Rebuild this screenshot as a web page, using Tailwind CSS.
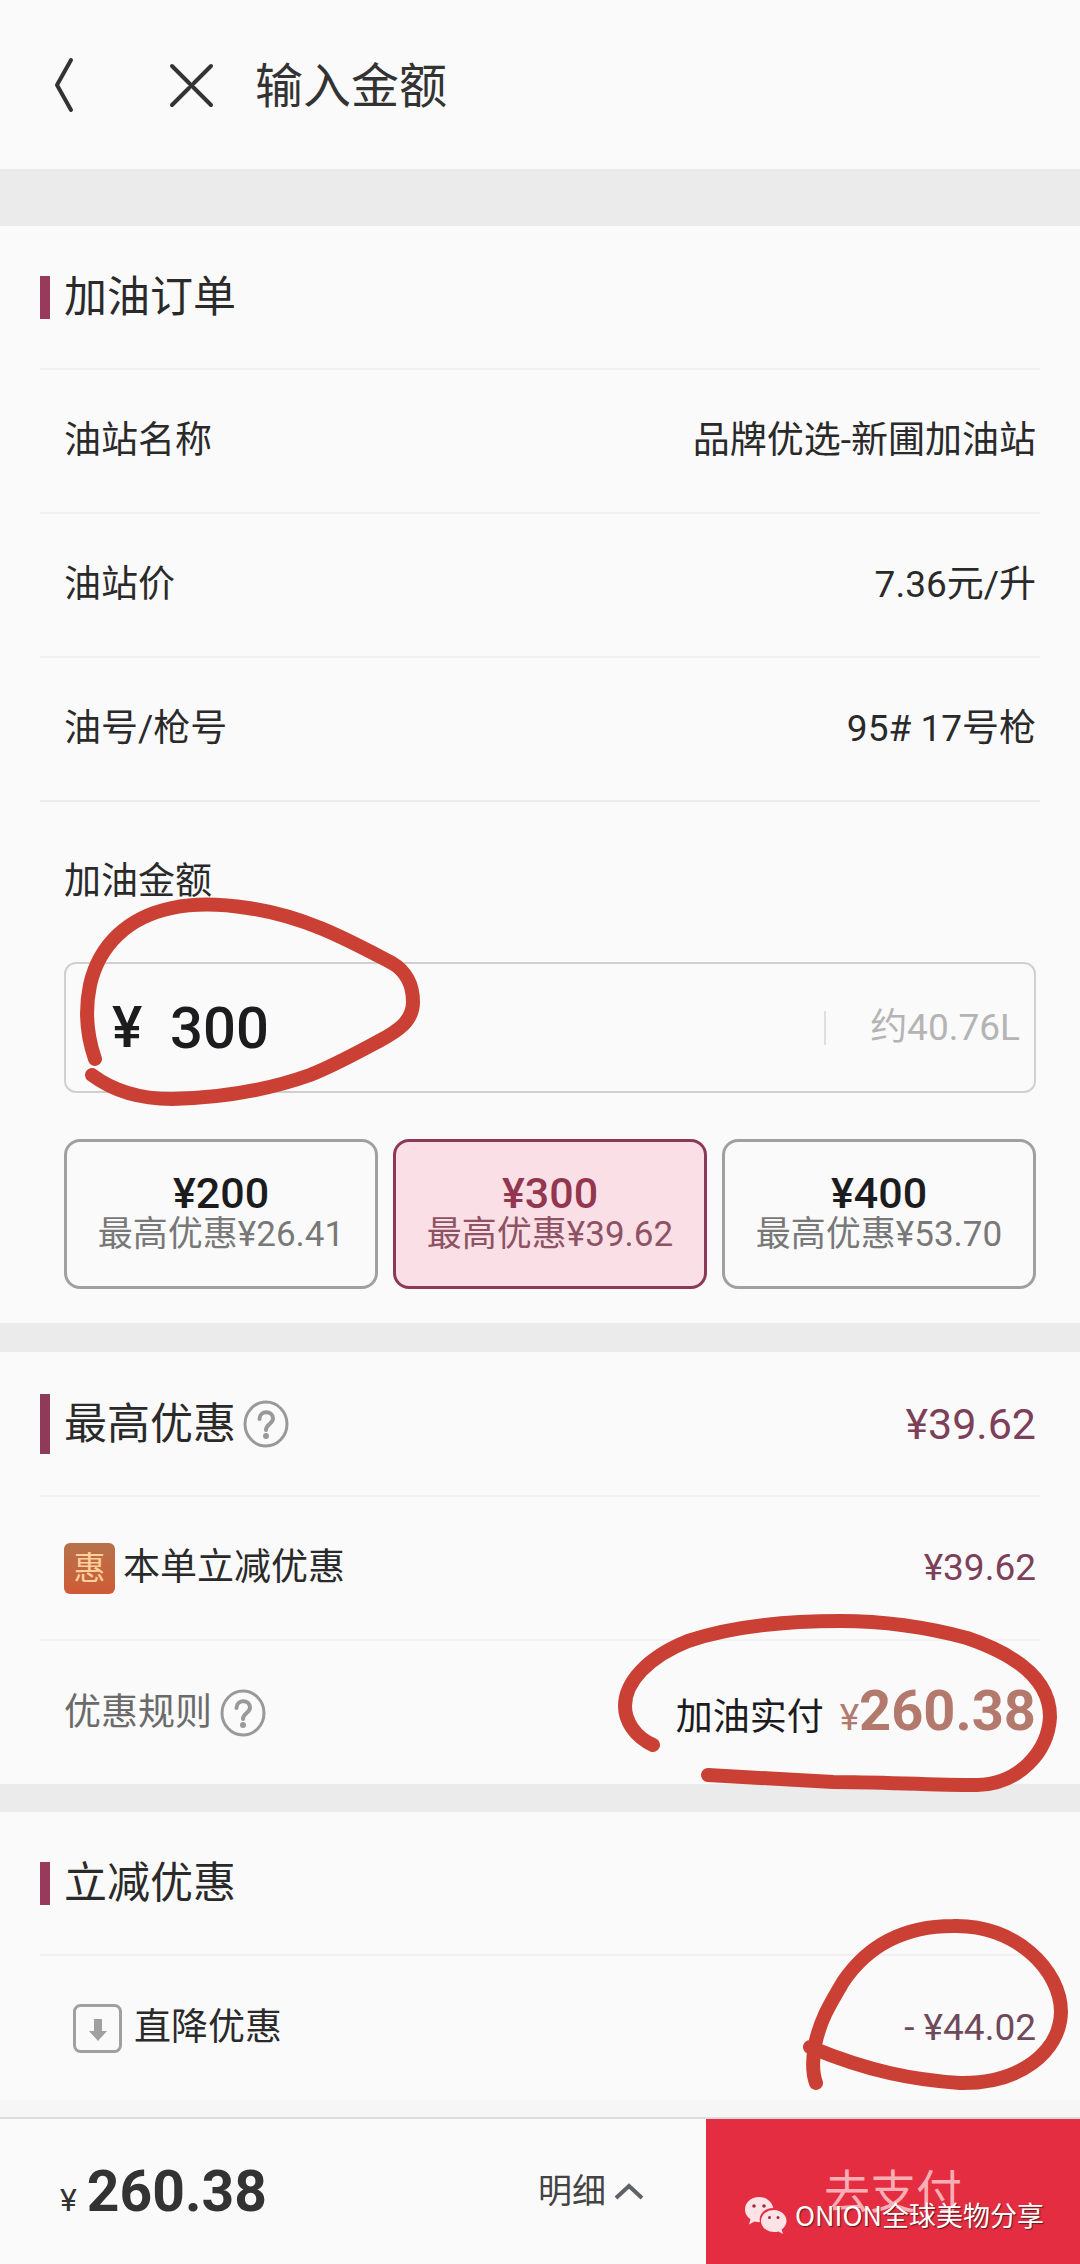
<!DOCTYPE html>
<html lang="zh-CN">
<head>
<meta charset="utf-8">
<meta name="viewport" content="width=device-width, initial-scale=1">
<title>输入金额</title>
<script src="https://cdn.jsdelivr.net/npm/@tailwindcss/browser@4"></script>
</head>
<body class="flex min-h-screen flex-col bg-[#fafafa] font-['Roboto','Noto_Sans_CJK_SC',sans-serif] text-[37px] leading-[48px] text-[#2a2a2a]">

<header class="flex h-[169px] items-center pl-[50px]">
  <button type="button" aria-label="返回" class="flex w-[118px] shrink-0">
    <svg class="h-[60px] w-[28px]" viewBox="0 0 28 60" fill="none" stroke="#333" stroke-width="4" stroke-linecap="round" stroke-linejoin="round"><path d="M21 5 7 30 21 55"/></svg>
  </button>
  <button type="button" aria-label="关闭" class="flex w-[87px] shrink-0">
    <svg class="h-[48px] w-[48px]" viewBox="0 0 48 48" fill="none" stroke="#333" stroke-width="4" stroke-linecap="round"><path d="M4 5 43 44M43 5 26 22M21 27 4 44"/></svg>
  </button>
  <h1 class="pt-1 text-[48px] leading-[60px] text-[#333]">输入金额</h1>
</header>

<main class="flex-1">
  <section class="relative border-t-[57px] border-[#ebebeb]">
    <div class="mx-10">
      <div class="flex h-[144px] items-center gap-[14px] border-b-2 border-[#f1f1f1]">
        <span class="h-[43px] w-[10px] bg-[#973a5b]"></span>
        <h2 class="text-[43px]">加油订单</h2>
      </div>
      <dl>
        <div class="flex h-[144px] items-center justify-between border-b-2 border-[#f1f1f1] pr-1 pl-6"><dt>油站名称</dt><dd>品牌优选-新圃加油站</dd></div>
        <div class="flex h-[144px] items-center justify-between border-b-2 border-[#f1f1f1] pr-1 pl-6"><dt>油站价</dt><dd>7.36元/升</dd></div>
        <div class="flex h-[144px] items-center justify-between border-b-2 border-[#ededed] pr-1 pl-6"><dt>油号/枪号</dt><dd>95# 17号枪</dd></div>
      </dl>
    </div>
    <div class="pt-14 pr-11 pb-[34px] pl-16">
      <label for="amount" class="block">加油金额</label>
      <div class="mt-14 flex h-[131px] items-center rounded-xl border-2 border-[#d0d0d0] pr-[14px] pl-[46px] font-medium text-[#1c1c1e]">
        <span class="w-[58px] shrink-0 text-[57px] leading-[68px]">¥</span>
        <input id="amount" type="text" inputmode="decimal" value="300" class="h-[68px] min-w-0 flex-1 bg-transparent text-[58px] leading-[68px] outline-none">
        <span class="h-[34px] w-[2px] bg-[#dedede]"></span>
        <span class="ml-[44px] font-normal text-[#b4b4b4]">约40.76L</span>
      </div>
      <div class="mt-[46px] grid grid-cols-3 gap-[15px]">
        <button type="button" aria-pressed="false" class="flex h-[150px] flex-col items-center justify-center rounded-2xl border-3 border-[#a0a0a0]">
          <span class="text-[43px] leading-[42px] font-medium text-[#1c1c1e]">¥200</span>
          <span class="text-[35px] leading-[42px] text-[#787878]">最高优惠¥26.41</span>
        </button>
        <button type="button" aria-pressed="true" class="flex h-[150px] flex-col items-center justify-center rounded-2xl border-3 border-[#8c3857] bg-[#fadfe6]">
          <span class="text-[43px] leading-[42px] font-medium text-[#93364f]">¥300</span>
          <span class="text-[35px] leading-[42px] text-[#8f5263]">最高优惠¥39.62</span>
        </button>
        <button type="button" aria-pressed="false" class="flex h-[150px] flex-col items-center justify-center rounded-2xl border-3 border-[#a0a0a0]">
          <span class="text-[43px] leading-[42px] font-medium text-[#1c1c1e]">¥400</span>
          <span class="text-[35px] leading-[42px] text-[#787878]">最高优惠¥53.70</span>
        </button>
      </div>
    </div>
    <!-- hand-drawn ring round the amount -->
    <svg class="pointer-events-none absolute top-[670px] left-[80px] z-10 h-[212px] w-[345px]" viewBox="80 896 345 212" fill="none" stroke="#cb4034" stroke-width="14" stroke-linecap="round" stroke-linejoin="round" aria-hidden="true"><path d="M95 1059C85 1030 86 1004 90 985C99 945 128 917 172 908C195 903 222 904 248 908C305 916 350 941 392 963C406 971 413 985 413 1002C413 1021 398 1031 379 1041C355 1054 333 1066 310 1075C265 1091 222 1098 172 1099C138 1099 112 1090 92 1075"/></svg>
  </section>

  <section class="relative border-t-[29px] border-[#ebebeb]">
    <div class="mx-10">
      <div class="flex h-[145px] items-center border-b-2 border-[#f1f1f1] pr-1">
        <span class="mr-[14px] h-[60px] w-[10px] bg-[#8f3a58]"></span>
        <h2 class="text-[43px]">最高优惠</h2>
        <button type="button" aria-label="最高优惠说明" class="ml-[7px]">
          <svg class="h-[48px] w-[46px]" viewBox="0 0 46 48" fill="none" stroke="#999" stroke-width="3" stroke-linecap="round"><ellipse cx="23" cy="24" rx="21" ry="22"/><path d="M16.500 19C16.500 10 30 10 30 18.500C30 24 23 24 23 30" stroke-width="4"/><circle cx="23" cy="36" r="1.500" fill="#999"/></svg>
        </button>
        <span class="ml-auto text-[43px] text-[#7d4059]">¥39.62</span>
      </div>
      <div class="flex h-[144px] items-center border-b-2 border-[#f3f3f3] pr-1 pl-6">
        <span class="mr-2 flex h-[51px] w-[51px] items-center justify-center rounded-md bg-linear-to-b from-[#b5724c] to-[#cf5a36] text-[32px] leading-[44px] text-[#ffd09a]">惠</span>
        <span>本单立减优惠</span>
        <span class="ml-auto text-[#7d4059]">¥39.62</span>
      </div>
      <div class="flex h-[143px] items-center pr-1 pl-6">
        <span class="text-[#6b6b6b]">优惠规则</span>
        <button type="button" aria-label="优惠规则说明" class="ml-2">
          <svg class="h-[48px] w-[46px]" viewBox="0 0 46 48" fill="none" stroke="#999" stroke-width="3" stroke-linecap="round"><ellipse cx="23" cy="24" rx="21" ry="22"/><path d="M16.500 19C16.500 10 30 10 30 18.500C30 24 23 24 23 30" stroke-width="4"/><circle cx="23" cy="36" r="1.500" fill="#999"/></svg>
        </button>
        <p class="ml-auto flex items-baseline pb-1 text-[#1c1c1e]">加油实付<span class="ml-4 text-[#b3796d]">¥</span><strong class="text-[56px] leading-[64px] font-bold text-[#b3796d]">260.38</strong></p>
      </div>
    </div>
    <!-- hand-drawn ring round the amount due -->
    <svg class="pointer-events-none absolute top-[258px] right-[20px] z-10 h-[190px] w-[445px]" viewBox="615 1610 445 190" fill="none" stroke="#cb4034" stroke-width="14" stroke-linecap="round" stroke-linejoin="round" aria-hidden="true"><path d="M653 1745C635 1737 625 1721 625 1706C625 1682 648 1657 688 1641C730 1627 780 1621 840 1621C885 1621 930 1628 967 1638C1020 1656 1050 1682 1050 1717C1048 1752 1019 1784 977 1785C930 1785 880 1782 833 1782L708 1775"/></svg>
  </section>

  <section class="relative border-t-[28px] border-[#ebebeb]">
    <div class="mx-10">
      <div class="flex h-[144px] items-center gap-[14px] border-b-2 border-[#f1f1f1]">
        <span class="h-[43px] w-[10px] bg-[#973a5b]"></span>
        <h2 class="text-[43px]">立减优惠</h2>
      </div>
      <div class="flex h-[144px] items-center pr-1 pl-[33px]">
        <svg class="mr-3 h-[49px] w-[49px]" viewBox="0 0 49 49" aria-hidden="true"><rect x="1.500" y="1.500" width="46" height="46" rx="6" fill="none" stroke="#a0a0a0" stroke-width="3"/><path d="M21 15h8v12h5l-9 10L16 27h5z" fill="#a0a0a0"/></svg>
        <span>直降优惠</span>
        <span class="ml-auto text-[#6f4a5c]">- ¥44.02</span>
      </div>
    </div>
    <!-- hand-drawn ring round the discount -->
    <svg class="pointer-events-none absolute top-[104px] right-[10px] z-10 h-[180px] w-[270px]" viewBox="800 1916 270 180" fill="none" stroke="#cb4034" stroke-width="14" stroke-linecap="round" stroke-linejoin="round" aria-hidden="true"><path d="M816 2083C812 2072 813 2056 815 2045C820 2020 830 2004 843 1982C868 1945 905 1926 953 1926C1015 1924 1061 1970 1061 2012C1060 2052 1020 2084 960 2083C915 2080 870 2072 810 2047"/></svg>
  </section>
</main>

<footer class="sticky bottom-0 border-t-[17px] border-[#f6f6f6] bg-[#fafafa]">
  <div class="flex h-[147px] items-stretch border-t-2 border-[#dcdcdc]">
    <p class="flex flex-1 items-center pl-[60px] text-[#333]">
      <span class="flex items-baseline gap-[10px]"><span class="text-[32px]">¥</span><strong class="text-[57px] leading-[64px] font-bold">260.38</strong></span>
    </p>
    <button type="button" class="mr-[62px] flex items-center gap-2 pb-[2px] text-[34px] text-[#444]">明细
      <svg class="h-[18px] w-[30px]" viewBox="0 0 30 18" fill="none" stroke="#5d6268" stroke-width="4" aria-hidden="true"><path d="M2 16 15 4 28 16"/></svg>
    </button>
    <button type="button" class="w-[374px] bg-[#e42d40] text-[46px] text-[#f9aeb6]">去支付</button>
  </div>
  <!-- publisher's mark -->
  <div class="absolute right-[36px] bottom-[27px] flex items-center gap-2 text-[27px] leading-[44px] text-white">
    <svg class="h-[38px] w-[43px]" viewBox="0 0 43 38" fill="#fde3e6" aria-hidden="true"><path d="M15 1C7 1 1 6.500 1 13.500C1 17.500 3 21 6.500 23.300L5 28.500L10.500 25.500C12 26 13.500 26.200 16 26.100C14 18 21 12 29.300 12C28 5.500 22 1 15 1Z"/><path d="M30 14C22.500 14 17 19 17 25C17 31 22.500 36 30 36C31.500 36 33 35.800 34.300 35.400L39 38L37.700 33.600C40.500 31.500 42.500 28.500 42.500 25C42.500 19 37 14 30 14Z"/><g fill="#a52b3c"><circle cx="10" cy="10" r="1.800"/><circle cx="20" cy="10" r="1.800"/><circle cx="25.500" cy="21.500" r="1.500"/><circle cx="34" cy="21.500" r="1.500"/></g></svg>
    <span class="font-['Noto_Sans_CJK_SC',sans-serif] [text-shadow:1px_1px_1px_#5a1a22]">ONION全球美物分享</span>
  </div>
</footer>
</body>
</html>
